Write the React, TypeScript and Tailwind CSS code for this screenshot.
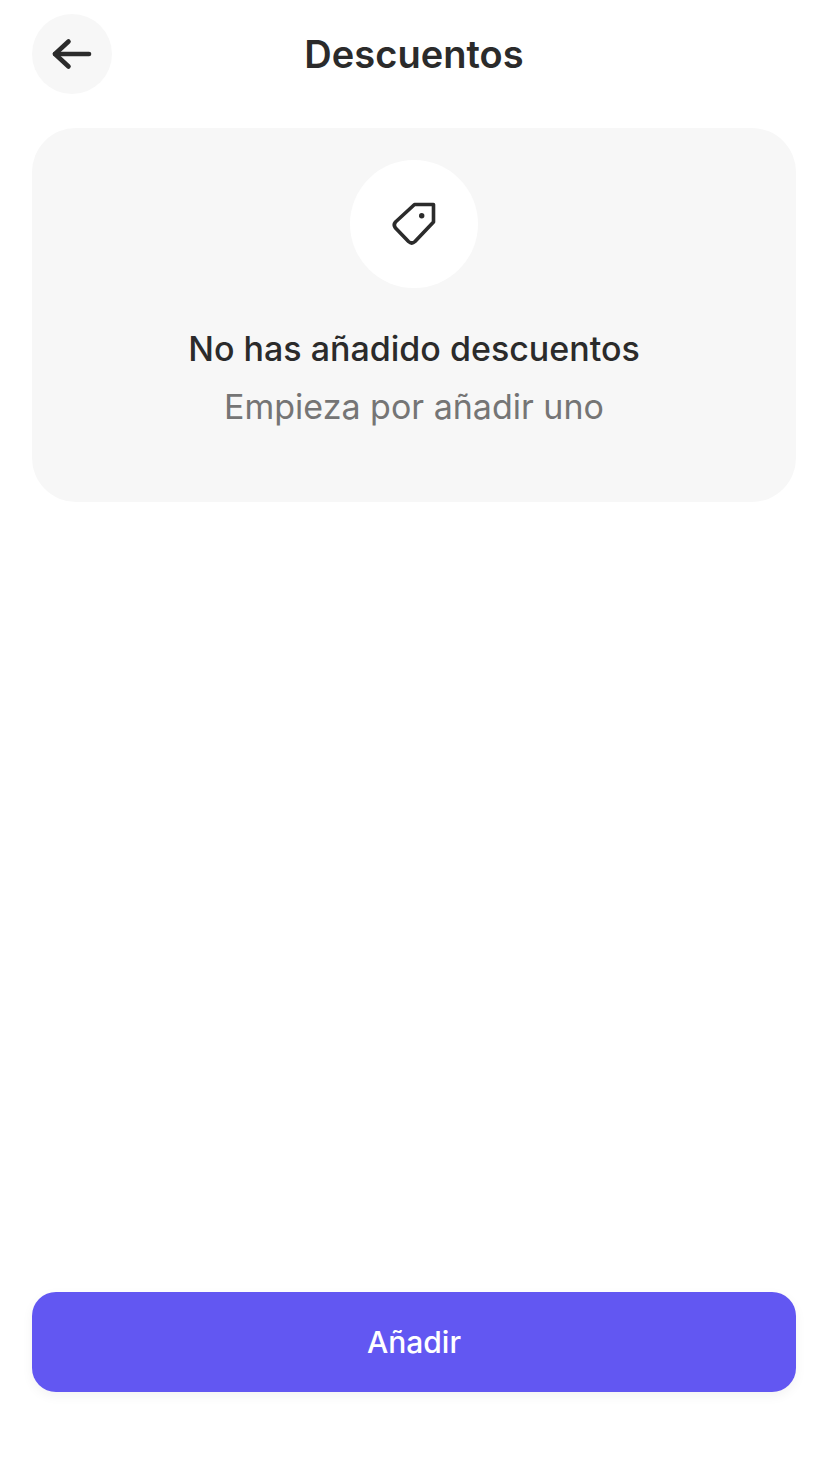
import React from "react";

const App: React.FC = () => {
  return (
    <div className="flex h-[1466px] w-[826px] flex-col bg-white pl-8 pr-[30px] font-['Inter',sans-serif]">
      <header className="relative mt-[14px] flex h-20 items-center justify-center">
        <button className="absolute left-0 top-0 flex h-20 w-20 items-center justify-center rounded-full bg-[#f7f7f7]">
          <svg width="48" height="48" viewBox="0 0 48 48" fill="none" stroke="#2b2b2b" strokeWidth="4.6" strokeLinecap="round" strokeLinejoin="round">
            <path d="M7 24H41" />
            <path d="M20.5 11.5L7 24L20.5 36.5" />
          </svg>
        </button>
        <h1 className="text-[38px] font-semibold leading-[48px] tracking-[0.05px] text-[#2b2b2b]">Descuentos</h1>
      </header>

      <section className="mt-[34px] flex h-[374px] flex-col items-center rounded-[44px] bg-[#f7f7f7] pt-8">
        <div className="flex h-32 w-32 items-center justify-center rounded-full bg-white">
          <svg width="48" height="48" viewBox="0 0 48 48" fill="none" stroke="#2b2b2b" strokeWidth="3.6" strokeLinejoin="round">
            <path d="M24.5 4.5H43.5V22L25 41.5Q21.7 44.5 18.5 41.5L5.5 28Q3 25 5.5 22Z" />
            <circle cx="31.7" cy="15.7" r="2.7" fill="#2b2b2b" stroke="none" />
          </svg>
        </div>
        <p className="mt-[41px] text-[34px] font-medium leading-10 text-[#2b2b2b]">No has añadido descuentos</p>
        <p className="mt-[18px] text-[34px] leading-10 text-[#757575]">Empieza por añadir uno</p>
      </section>

      <div className="flex-1" />

      <button className="mb-[74px] flex h-[100px] items-center justify-center rounded-3xl bg-[#6257f2] text-[30px] font-medium text-white shadow-[0_4px_12px_rgba(0,0,0,0.05)]">
        Añadir
      </button>
    </div>
  );
};

export default App;
